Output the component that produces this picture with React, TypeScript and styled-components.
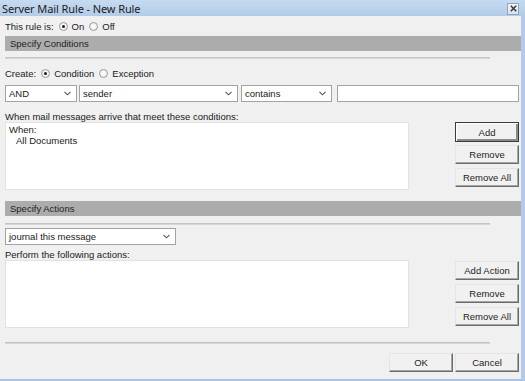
import React from "react";
import styled, { createGlobalStyle } from "styled-components";

const GlobalStyle = createGlobalStyle`
  html, body { margin: 0; padding: 0; background: #f0f0f0; }
  * { box-sizing: border-box; }
`;

const Window = styled.div`
  width: 525px;
  height: 381px;
  display: flex;
  flex-direction: column;
  background: #f0f0f0;
  font-family: "Liberation Sans", Arial, sans-serif;
  font-size: 9.5px;
  color: #1a1a1a;
  overflow: hidden;
`;

const TitleBar = styled.div`
  height: 16px;
  flex: none;
  display: flex;
  align-items: center;
  justify-content: space-between;
  padding: 0 6px 0 2px;
  background: linear-gradient(#c6dbf0, #b2cbe7);
`;

const Title = styled.span`
  font-family: "Noto Sans", "Liberation Sans", sans-serif;
  font-size: 11px;
  color: #1b1b1b;
  letter-spacing: -0.1px;
`;

const CloseButton = styled.div`
  width: 12px;
  height: 12px;
  margin-top: 1px;
  border: 1px solid #8ea6c3;
  background: linear-gradient(#f4f6f9, #d9e0e8);
  display: flex;
  align-items: center;
  justify-content: center;
`;

const Body = styled.div`
  flex: 1;
  display: flex;
  flex-direction: column;
  padding-left: 5px;
  border-right: 4px solid #b3cbe6;
  border-bottom: 2px solid #a9c3e2;
`;

const InlineRow = styled.div<{ $top: number }>`
  height: 14px;
  margin-top: ${(p) => p.$top}px;
  display: flex;
  align-items: center;
  gap: 3px;
`;

const RadioLabel = styled.label`
  display: flex;
  align-items: center;
  gap: 4px;
  margin-left: 2px;
`;

const RadioCircle = styled.span<{ $on?: boolean }>`
  width: 9px;
  height: 9px;
  border-radius: 50%;
  border: 1px solid #9a9a9a;
  background: radial-gradient(circle, #ffffff 0%, #e8e8e8 100%);
  display: flex;
  align-items: center;
  justify-content: center;
  &::after {
    content: "";
    width: 3px;
    height: 3px;
    border-radius: 50%;
    background: ${(p) => (p.$on ? "#1c1c1c" : "transparent")};
  }
`;

const SectionHeader = styled.div<{ $top: number }>`
  height: 15px;
  margin-top: ${(p) => p.$top}px;
  background: #acacac;
  display: flex;
  align-items: center;
  padding-left: 5px;
  color: #1f1f1f;
`;

const Separator = styled.div<{ $top: number }>`
  width: 485px;
  height: 2px;
  margin-top: ${(p) => p.$top}px;
  border-top: 1px solid #c4c4c4;
  border-bottom: 1px solid #d6d6d6;
`;

const ControlsRow = styled.div<{ $top: number }>`
  height: 17px;
  margin-top: ${(p) => p.$top}px;
  display: flex;
`;

const SelectBox = styled.div<{ $w: number; $gap?: number }>`
  width: ${(p) => p.$w}px;
  height: 17px;
  margin-right: ${(p) => p.$gap ?? 0}px;
  background: #fff;
  border: 1px solid #a3a3a3;
  display: flex;
  align-items: center;
  justify-content: space-between;
  padding: 0 5px 0 3px;
`;

const TextInput = styled.div<{ $w: number }>`
  width: ${(p) => p.$w}px;
  height: 17px;
  background: #fff;
  border: 1px solid #a3a3a3;
`;

const FieldLabel = styled.div<{ $top: number; $h: number }>`
  height: ${(p) => p.$h}px;
  margin-top: ${(p) => p.$top}px;
  display: flex;
  align-items: center;
`;

const Area = styled.div`
  display: flex;
  justify-content: space-between;
  padding-right: 2px;
`;

const ListBox = styled.div`
  width: 404px;
  height: 68px;
  background: #fff;
  border: 1px solid #e2e2e2;
  padding: 1px 3px;
  line-height: 11px;
`;

const Indent = styled.div`
  padding-left: 7px;
`;

const ButtonColumn = styled.div<{ $top: number }>`
  display: flex;
  flex-direction: column;
  padding-top: ${(p) => p.$top}px;
`;

const Button = styled.div<{ $default?: boolean; $h?: number; $gap?: number }>`
  width: 64px;
  height: ${(p) => p.$h ?? 19}px;
  margin-bottom: ${(p) => p.$gap ?? 0}px;
  display: flex;
  align-items: center;
  justify-content: center;
  background: #f1f1f1;
  border: 1px solid;
  border-color: #e4e4e4 #6b6b6b #6b6b6b #e4e4e4;
  box-shadow: inset -1px -1px 0 #a6a6a6;
  ${(p) =>
    p.$default &&
    `
    border: 1px solid #3a3a3a;
    box-shadow: inset 1px 1px 0 #ffffff, inset -2px -2px 0 #8a8a8a;
  `}
  color: #1e1e1e;
`;

const Footer = styled.div`
  margin-top: 9px;
  display: flex;
  justify-content: flex-end;
  gap: 2px;
  padding-right: 2px;
`;

const Chevron = () => (
  <svg width="7" height="5" viewBox="0 0 7 5">
    <polyline points="0.5,0.8 3.5,3.8 6.5,0.8" fill="none" stroke="#555" strokeWidth="1.1" />
  </svg>
);

const Select = ({ w, gap, children }: { w: number; gap?: number; children: React.ReactNode }) => (
  <SelectBox $w={w} $gap={gap}>
    <span>{children}</span>
    <Chevron />
  </SelectBox>
);

export default function App() {
  return (
    <Window>
      <GlobalStyle />
      <TitleBar>
        <Title>Server Mail Rule - New Rule</Title>
        <CloseButton>
          <svg width="7" height="7" viewBox="0 0 7 7">
            <path d="M0.8 0.8 L6.2 6.2 M6.2 0.8 L0.8 6.2" stroke="#3c3c3c" strokeWidth="1.6" />
          </svg>
        </CloseButton>
      </TitleBar>
      <Body>
        <InlineRow $top={3}>
          <span>This rule is:</span>
          <RadioLabel>
            <RadioCircle $on />
            On
          </RadioLabel>
          <RadioLabel>
            <RadioCircle />
            Off
          </RadioLabel>
        </InlineRow>
        <SectionHeader $top={3}>Specify Conditions</SectionHeader>
        <Separator $top={6} />
        <InlineRow $top={7}>
          <span>Create:</span>
          <RadioLabel>
            <RadioCircle $on />
            Condition
          </RadioLabel>
          <RadioLabel>
            <RadioCircle />
            Exception
          </RadioLabel>
        </InlineRow>
        <ControlsRow $top={5}>
          <Select w={72} gap={2}>AND</Select>
          <Select w={159} gap={3}>sender</Select>
          <Select w={91} gap={5}>contains</Select>
          <TextInput $w={182} />
        </ControlsRow>
        <FieldLabel $top={8} $h={12}>When mail messages arrive that meet these conditions:</FieldLabel>
        <Area>
          <ListBox>
            <div>When:</div>
            <Indent>All Documents</Indent>
          </ListBox>
          <ButtonColumn $top={0}>
            <Button $default $h={20} $gap={3}>Add</Button>
            <Button $gap={4}>Remove</Button>
            <Button>Remove All</Button>
          </ButtonColumn>
        </Area>
        <SectionHeader $top={11}>Specify Actions</SectionHeader>
        <Separator $top={7} />
        <ControlsRow $top={3}>
          <Select w={171}>journal this message</Select>
        </ControlsRow>
        <FieldLabel $top={4} $h={11}>Perform the following actions:</FieldLabel>
        <Area>
          <ListBox />
          <ButtonColumn $top={1}>
            <Button $gap={4}>Add Action</Button>
            <Button $gap={4}>Remove</Button>
            <Button>Remove All</Button>
          </ButtonColumn>
        </Area>
        <Separator $top={14} />
        <Footer>
          <Button>OK</Button>
          <Button>Cancel</Button>
        </Footer>
      </Body>
    </Window>
  );
}
